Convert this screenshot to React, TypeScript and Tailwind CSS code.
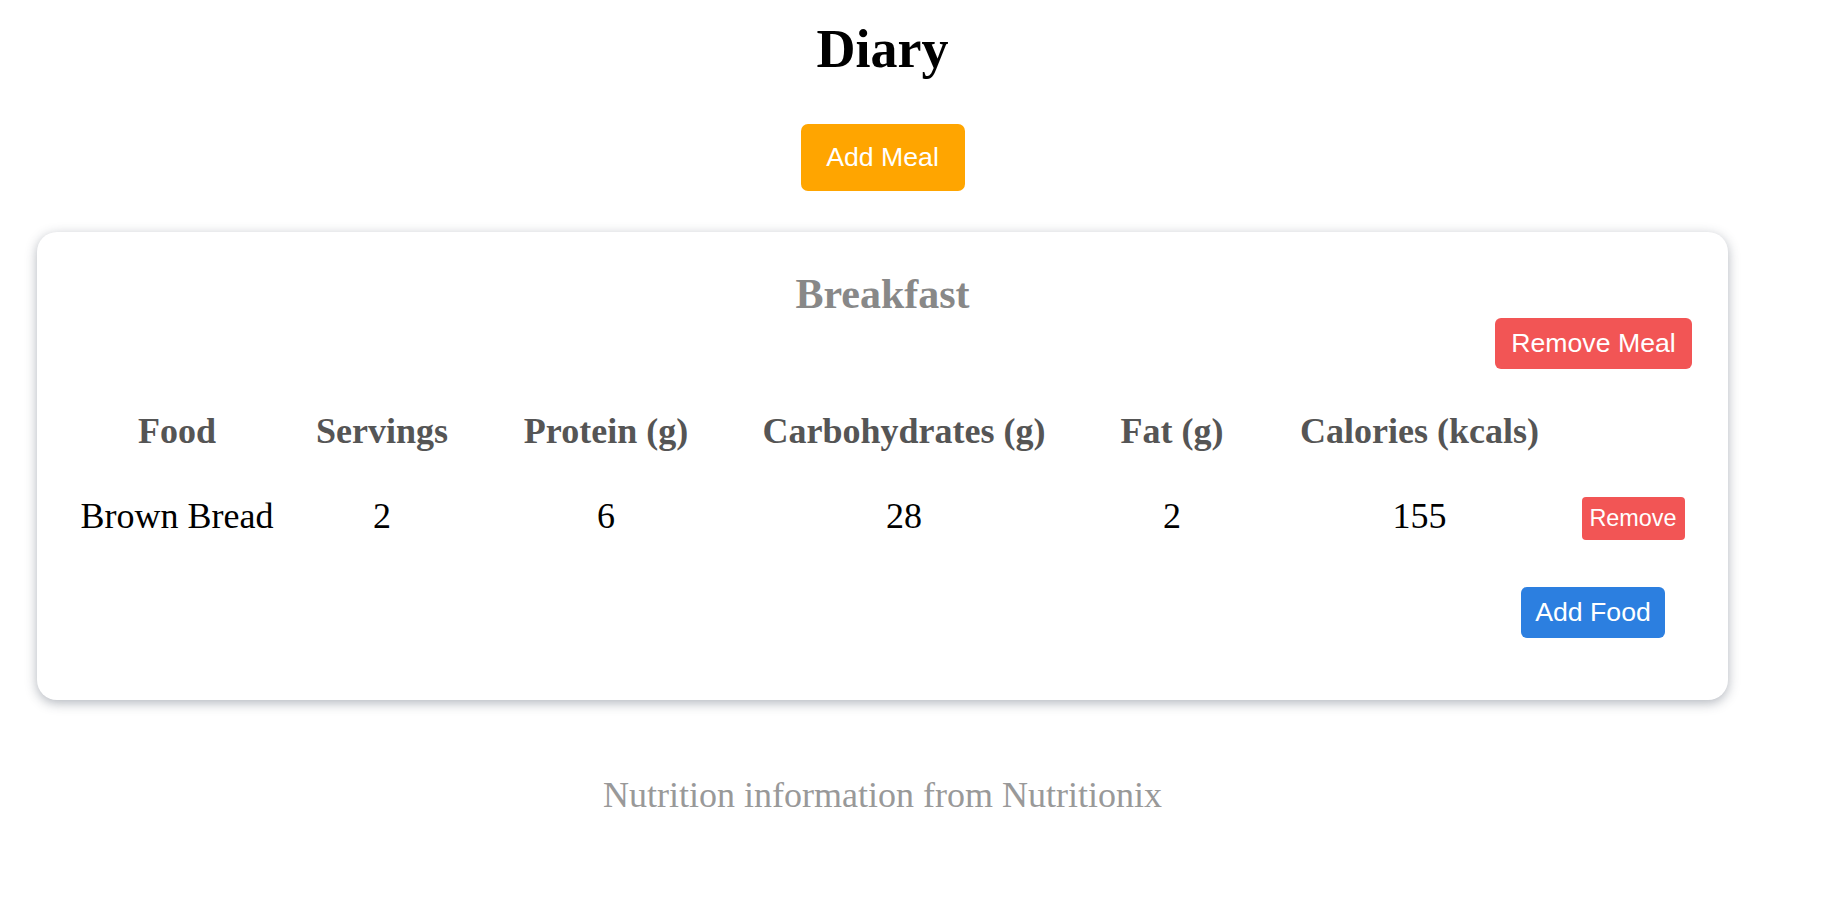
import React from "react";

const serif = "font-['Liberation_Serif','Times_New_Roman',serif]";
const sans = "font-['Liberation_Sans',Arial,sans-serif]";

const headers = [
  "Food",
  "Servings",
  "Protein (g)",
  "Carbohydrates (g)",
  "Fat (g)",
  "Calories (kcals)",
  "",
];

const row = ["Brown Bread", "2", "6", "28", "2", "155"];

export default function App() {
  return (
    <div className={`w-[1765px] min-h-[901px] bg-white ${serif}`}>
      <h1 className="pt-[18px] text-center text-[54px] leading-[62px] font-bold text-black">
        Diary
      </h1>
      <div className="mt-[44px] flex justify-center">
        <button
          className={`h-[67px] w-[164px] rounded-[7px] bg-[#ffa500] text-[26.67px] leading-none text-white ${sans}`}
        >
          Add Meal
        </button>
      </div>

      <div className="mx-[37px] mt-[41px] rounded-[20px] bg-white pt-[38px] pb-[62px] shadow-[0_3px_12px_rgba(50,60,80,0.38)]">
        <h2 className="text-center text-[42px] leading-[48px] font-bold text-[#888888]">
          Breakfast
        </h2>
        <div className="flex justify-end pr-[36px]">
          <button
            className={`h-[51px] w-[197px] rounded-[6px] bg-[#f25555] text-[26.67px] leading-none text-white ${sans}`}
          >
            Remove Meal
          </button>
        </div>

        <div className="mx-auto mt-[41px] grid w-[1613px] grid-cols-[202px_208px_240px_356px_180px_315px_112px]">
          {headers.map((h, i) => (
            <div
              key={i}
              className="h-[42px] text-center text-[36px] leading-[42px] font-bold text-[#555555] whitespace-nowrap"
            >
              {h}
            </div>
          ))}
          {row.map((c, i) => (
            <div
              key={`r${i}`}
              className="mt-[43px] h-[42px] text-center text-[36px] leading-[42px] text-black whitespace-nowrap"
            >
              {c}
            </div>
          ))}
          <div className="mt-[45px] flex justify-center">
            <button
              className={`h-[43px] w-[103px] rounded-[4px] bg-[#f25555] text-[23.4px] leading-none text-white ${sans}`}
            >
              Remove
            </button>
          </div>
        </div>

        <div className="mt-[47px] flex justify-end pr-[63px]">
          <button
            className={`h-[51px] w-[144px] rounded-[6px] bg-[#2c7fe0] text-[26.67px] leading-none text-white ${sans}`}
          >
            Add Food
          </button>
        </div>
      </div>

      <p className="mt-[74px] text-center text-[36px] leading-[42px] text-[#999999]">
        Nutrition information from Nutritionix
      </p>
    </div>
  );
}
